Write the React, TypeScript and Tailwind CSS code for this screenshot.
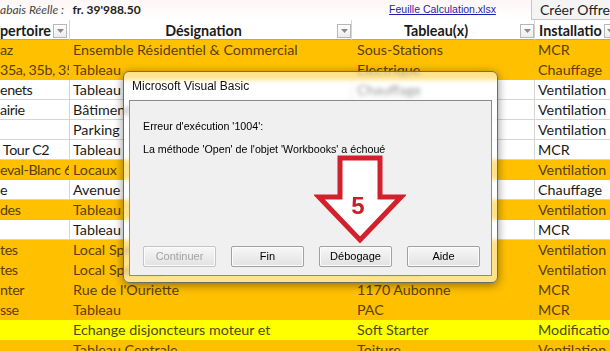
import React from "react";

type Fill = "o" | "w" | "y";

interface Row {
  a: string;
  b: string;
  c: string;
  d: string;
  fill: Fill;
}

const rows: Row[] = [
  { a: "az", b: "Ensemble Résidentiel & Commercial", c: "Sous-Stations", d: "MCR", fill: "o" },
  { a: "35a, 35b, 35", b: "Tableau", c: "Electrique", d: "Chauffage", fill: "o" },
  { a: "enets", b: "Tableau", c: "Chauffage", d: "Ventilation", fill: "w" },
  { a: "airie", b: "Bâtiment", c: "Monobloc", d: "Ventilation", fill: "w" },
  { a: "", b: "Parking", c: "Ventilation", d: "Ventilation", fill: "w" },
  { a: " Tour C2", b: "Tableau", c: "Electrique", d: "MCR", fill: "w" },
  { a: "eval-Blanc 6", b: "Locaux", c: "Monobloc", d: "Ventilation", fill: "o" },
  { a: "e", b: "Avenue", c: "Chauffage", d: "Chauffage", fill: "w" },
  { a: "des", b: "Tableau", c: "Ventilation", d: "Ventilation", fill: "o" },
  { a: "", b: "Tableau", c: "Electrique", d: "MCR", fill: "w" },
  { a: "tes", b: "Local Sprinkler", c: "Monobloc", d: "Ventilation", fill: "o" },
  { a: "tes", b: "Local Sprinkler", c: "Monobloc", d: "Ventilation", fill: "o" },
  { a: "nter", b: "Rue de l'Ouriette", c: "1170 Aubonne", d: "MCR", fill: "o" },
  { a: "sse", b: "Tableau", c: "PAC", d: "MCR", fill: "o" },
  { a: "", b: "Echange disjoncteurs moteur et", c: "Soft Starter", d: "Modification", fill: "y" },
  { a: "", b: "Tableau Centrale", c: "Toiture", d: "Ventilation", fill: "o" },
];

const fillClass: Record<Fill, string> = {
  o: "bg-[#ffc000] text-[#5a3f00] border-[#ffc000]",
  w: "bg-white text-[#1a1a1a] border-[#d4d4d4]",
  y: "bg-[#ffff00] text-[#4a4a00] border-[#ffff00]",
};

const FilterButton = () => (
  <span className="flex h-[14px] w-[14px] items-center justify-center border border-[#b8b8b8] bg-gradient-to-b from-white to-[#ececec]">
    <svg width="7" height="4" viewBox="0 0 7 4">
      <path d="M0 0 L7 0 L3.5 4 Z" fill="#8a8a8a" />
    </svg>
  </span>
);

const VbButton = ({ label, disabled }: { label: string; disabled?: boolean }) => (
  <div
    className={`flex h-[21px] w-[73px] items-center justify-center rounded-[2px] border bg-gradient-to-b from-[#f7f7f7] to-[#e2e2e2] text-[11px] shadow-[inset_0_0_0_1px_#fcfcfc] ${
      disabled ? "border-[#c4c4c4] text-[#a3a3a3]" : "border-[#a0a0a0] text-black"
    }`}
  >
    {label}
  </div>
);

export default function App() {
  return (
    <div className="relative h-[351px] w-[610px] overflow-hidden bg-white font-['Lato',sans-serif]">
      {/* top strip */}
      <div className="flex h-[20px] items-center bg-gradient-to-b from-[#fdf6f6] to-white text-[12px]">
        <span className="w-[73px] whitespace-nowrap italic text-[#444]">abais Réelle :</span>
        <span className="w-[319px] font-bold text-[#222]">fr. 39'988.50</span>
        <span className="w-[143px] font-['Liberation_Sans',sans-serif] text-[10.5px] text-[#1f1fae] underline">
          Feuille Calculation.xlsx
        </span>
        <span className="flex h-[20px] flex-1 items-center whitespace-nowrap border-b border-l border-[#c6c6c6] bg-[#f4f4f4] pl-[8px] text-[14px] text-[#222]">
          Créer Offre
        </span>
      </div>

      {/* header */}
      <div className="grid h-[20px] grid-cols-[70px_282px_183px_75px] border-b border-[#a6a6a6] bg-white text-[14.3px] font-bold text-[#1a1a1a]">
        <div className="flex items-center justify-between border-r border-[#d4d4d4] pr-[2px]">
          <span className="whitespace-nowrap">pertoire</span>
          <FilterButton />
        </div>
        <div className="flex items-center border-r border-[#d4d4d4]">
          <span className="flex-1 text-center">Désignation</span>
          <FilterButton />
        </div>
        <div className="flex items-center border-r border-[#d4d4d4]">
          <span className="flex-1 text-center">Tableau(x)</span>
          <FilterButton />
        </div>
        <div className="flex items-center overflow-hidden pl-[4px]">
          <span className="whitespace-nowrap">Installatio</span>
          <span className="ml-[2px] shrink-0">
            <FilterButton />
          </span>
        </div>
      </div>

      {/* rows */}
      {rows.map((r, i) => (
        <div key={i} className="grid h-[20px] grid-cols-[70px_282px_183px_75px] text-[14.3px] leading-[20px]">
          <div className={`overflow-hidden whitespace-pre border-b border-r tracking-[-0.4px] ${fillClass[r.fill]}`}>{r.a}</div>
          <div className={`overflow-hidden whitespace-nowrap border-b border-r pl-[3px] ${fillClass[r.fill]}`}>{r.b}</div>
          <div className={`overflow-hidden whitespace-nowrap border-b border-r pl-[5px] ${fillClass[r.fill]}`}>{r.c}</div>
          <div className={`overflow-hidden whitespace-nowrap border-b pl-[3px] ${fillClass[r.fill]}`}>{r.d}</div>
        </div>
      ))}

      {/* VBA error dialog */}
      <div className="absolute left-[123px] top-[71px] flex h-[212px] w-[375px] flex-col rounded-[6px] border border-[#6b6b6b] bg-white/55 px-[5px] pb-[6px] shadow-[0_2px_10px_rgba(0,0,0,0.45)] backdrop-blur-[2px]">
        <div className="flex h-[28px] items-center pl-[3px] font-['Liberation_Sans',sans-serif] text-[12px] text-[#111]">
          Microsoft Visual Basic
        </div>
        <div className="flex flex-1 flex-col border border-[#8a8a8a] bg-[#f0f0f0] pl-[13px] font-['Liberation_Sans',sans-serif] text-[10.7px] leading-[13px] text-black">
          <div className="mt-[19px]">Erreur d'exécution '1004':</div>
          <div className="mt-[10px]">La méthode 'Open' de l'objet 'Workbooks' a échoué</div>
          <div className="mb-[8px] mt-auto flex gap-[15px]">
            <VbButton label="Continuer" disabled />
            <VbButton label="Fin" />
            <VbButton label="Débogage" />
            <VbButton label="Aide" />
          </div>
        </div>
      </div>

      {/* red annotation arrow */}
      <svg className="absolute left-[314px] top-[154px]" width="92" height="92" viewBox="314 154 92 92">
        <path
          d="M340 158 L380 158 L380 197 L401 197 L360 240 L319 197 L340 197 Z"
          fill="white"
          stroke="#d2202c"
          strokeWidth="5"
          strokeLinejoin="miter"
        />
        <text
          x="358"
          y="214"
          textAnchor="middle"
          fontFamily="Liberation Sans, sans-serif"
          fontWeight="bold"
          fontSize="24"
          fill="#c8202a"
        >
          5
        </text>
      </svg>
    </div>
  );
}
